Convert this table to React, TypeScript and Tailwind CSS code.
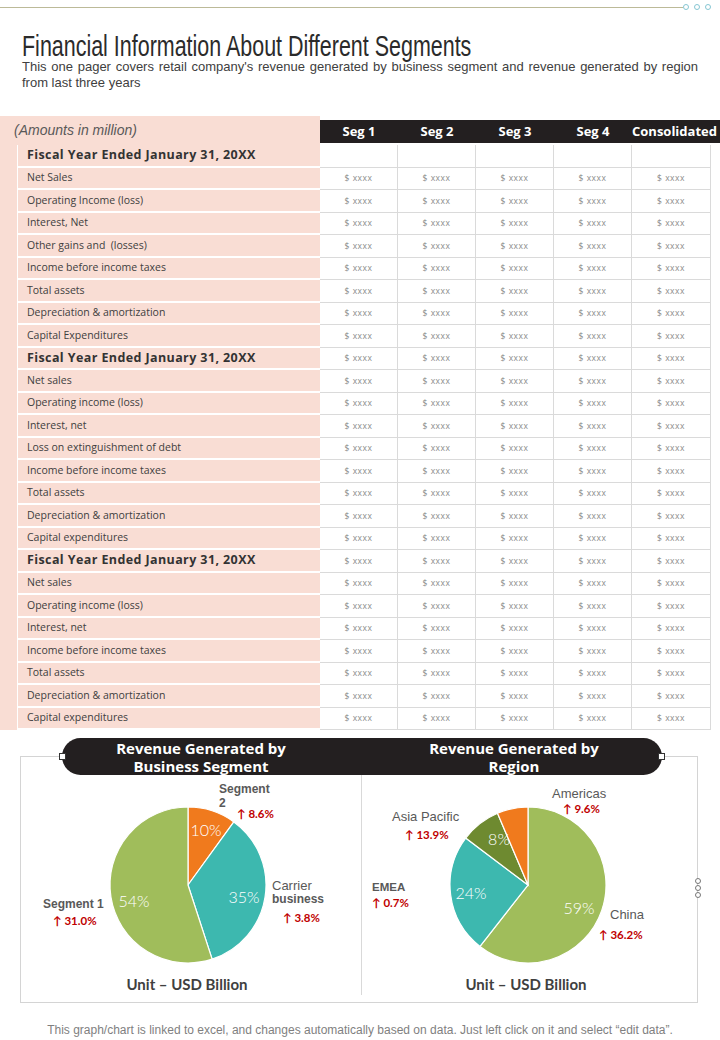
import React from "react";

const open = "[font-family:'Open_Sans','Noto_Sans',sans-serif]";

type Row = { label: string; head?: boolean; blank?: boolean };

const fy = "Fiscal Year Ended January 31, 20XX";

const rows: Row[] = [
  { label: fy, head: true, blank: true },
  { label: "Net Sales" },
  { label: "Operating Income (loss)" },
  { label: "Interest, Net" },
  { label: "Other gains and\u00a0 (losses)" },
  { label: "Income before income taxes" },
  { label: "Total assets" },
  { label: "Depreciation & amortization" },
  { label: "Capital Expenditures" },
  { label: fy, head: true },
  { label: "Net sales" },
  { label: "Operating income (loss)" },
  { label: "Interest, net" },
  { label: "Loss on extinguishment of debt" },
  { label: "Income before income taxes" },
  { label: "Total assets" },
  { label: "Depreciation & amortization" },
  { label: "Capital expenditures" },
  { label: fy, head: true },
  { label: "Net sales" },
  { label: "Operating income (loss)" },
  { label: "Interest, net" },
  { label: "Income before income taxes" },
  { label: "Total assets" },
  { label: "Depreciation & amortization" },
  { label: "Capital expenditures" },
];

const cols = ["Seg 1", "Seg 2", "Seg 3", "Seg 4", "Consolidated"];
const colW = ["w-[78px]", "w-[78px]", "w-[78px]", "w-[78px]", "w-[79px]"];

function arc(cx: number, cy: number, r: number, a0: number, a1: number) {
  const p = (a: number) => {
    const t = (a * Math.PI) / 180;
    return [cx + r * Math.sin(t), cy - r * Math.cos(t)];
  };
  const [x0, y0] = p(a0);
  const [x1, y1] = p(a1);
  const large = a1 - a0 > 180 ? 1 : 0;
  return `M${cx} ${cy} L${x0.toFixed(2)} ${y0.toFixed(2)} A${r} ${r} 0 ${large} 1 ${x1.toFixed(2)} ${y1.toFixed(2)} Z`;
}

type Slice = { a0: number; a1: number; color: string };

function Pie({ cx, cy, slices }: { cx: number; cy: number; slices: Slice[] }) {
  return (
    <g>
      {slices.map((s, i) => (
        <path key={i} d={arc(cx, cy, 78, s.a0, s.a1)} fill={s.color} stroke="#ffffff" strokeWidth={1.2} />
      ))}
    </g>
  );
}

// label styles for the chart canvas
const gray = "fill-[#595959] [font-family:'Liberation_Sans',Arial,sans-serif]";
const red = "fill-[#c00000] text-[11.5px] font-bold [font-family:'Lato','Liberation_Sans',sans-serif]";
const pct = "fill-white text-[16px] font-light [font-family:'Lato',sans-serif]";
const unit = "fill-[#404040] text-[15px] font-bold [font-family:'Lato',sans-serif]";

function SegmentChart() {
  return (
    <svg width={340} height={227} className="block">
      <Pie
        cx={167}
        cy={110}
        slices={[
          { a0: 0, a1: 36, color: "#f07a1d" },
          { a0: 36, a1: 162, color: "#3db8af" },
          { a0: 162, a1: 360, color: "#a0bd5b" },
        ]}
      />
      <text x={185} y={61} textAnchor="middle" className={pct}>10%</text>
      <text x={223} y={128} textAnchor="middle" className={pct}>35%</text>
      <text x={113} y={132} textAnchor="middle" className={pct}>54%</text>

      <text x={198} y={18} className={`${gray} text-[12px] font-bold`}>Segment</text>
      <text x={198} y={32} className={`${gray} text-[12px] font-bold`}>2</text>
      <text x={216} y={43} className={red}>↑ 8.6%</text>

      <text x={251} y={115} className={`${gray} text-[13px]`}>Carrier</text>
      <text x={251} y={128} className={`${gray} text-[12px] font-bold`}>business</text>
      <text x={262} y={147} className={red}>↑ 3.8%</text>

      <text x={22} y={133} className={`${gray} text-[12px] font-bold`}>Segment 1</text>
      <text x={32} y={150} className={red}>↑ 31.0%</text>

      <text x={166} y={215} textAnchor="middle" className={unit}>Unit – USD Billion</text>
    </svg>
  );
}

function RegionChart() {
  return (
    <svg width={334} height={227} className="block">
      <Pie
        cx={166}
        cy={110}
        slices={[
          { a0: 0, a1: 218, color: "#a0bd5b" },
          { a0: 218, a1: 307, color: "#3db8af" },
          { a0: 307, a1: 337, color: "#6e8a30" },
          { a0: 337, a1: 360, color: "#f07a1d" },
        ]}
      />
      <text x={137} y={70} textAnchor="middle" className={pct}>8%</text>
      <text x={109} y={124} textAnchor="middle" className={pct}>24%</text>
      <text x={217} y={139} textAnchor="middle" className={pct}>59%</text>

      <text x={190} y={23} className={`${gray} text-[13px]`}>Americas</text>
      <text x={201} y={38} className={red}>↑ 9.6%</text>

      <text x={30} y={46} className={`${gray} text-[13px]`}>Asia Pacific</text>
      <text x={43} y={64} className={red}>↑ 13.9%</text>

      <text x={10} y={116} className={`${gray} text-[11.5px] font-bold`}>EMEA</text>
      <text x={10} y={132} className={red}>↑ 0.7%</text>

      <text x={248} y={144} className={`${gray} text-[13px]`}>China</text>
      <text x={237} y={164} className={red}>↑ 36.2%</text>

      <text x={164} y={215} textAnchor="middle" className={unit}>Unit – USD Billion</text>
    </svg>
  );
}

export default function App() {
  return (
    <div className="relative h-[1040px] w-[720px] overflow-hidden bg-white [font-family:'Liberation_Sans',Arial,sans-serif]">
      {/* top rule with three rings */}
      <div className="flex h-[14px] items-center pr-[9px]">
        <div className="h-px flex-1 bg-[#bcba98]" />
        <div className="flex gap-[5px]">
          <span className="h-[6px] w-[6px] rounded-full border border-[#86c6d3]" />
          <span className="h-[6px] w-[6px] rounded-full border border-[#86c6d3]" />
          <span className="h-[6px] w-[6px] rounded-full border border-[#86c6d3]" />
        </div>
      </div>

      {/* no narrow face is installed, so the title is squeezed horizontally */}
      <h1 className="mt-[20px] h-[24px] px-[22px] text-[29px] font-normal leading-[24px] text-[#2b2b2b]">
        <span className="inline-block origin-left scale-x-[0.74] whitespace-nowrap">
          Financial Information About Different Segments
        </span>
      </h1>
      <div className="mt-px px-[22px] text-[13px] leading-[16px] text-[#404040]">
        <p className="text-justify [text-align-last:justify]">
          This one pager covers retail company's revenue generated by business segment and revenue generated by region
        </p>
        <p>from last three years</p>
      </div>

      {/* table */}
      <div className="mt-[25px]">
        <div className="flex h-[29px]">
          <div className="flex w-[320px] items-center bg-[#f9ddd4] pl-[14px] text-[14px] italic text-[#595959]">
            (Amounts in million)
          </div>
          <div className="pt-[4px]">
            <div className={`flex h-[23px] w-[400px] items-center bg-[#231f20] text-[13px] font-bold text-white ${open}`}>
              {cols.map((c, i) => (
                <div key={c} className={`${colW[i]} whitespace-nowrap text-center`}>
                  {c}
                </div>
              ))}
            </div>
          </div>
        </div>

        {rows.map((r, i) => (
          <div key={i} className="flex h-[22.5px]">
            <div className="w-[17px] bg-[#f9ddd4]" />
            <div
              className={`flex w-[303px] items-center border-b-2 border-l border-white bg-[#f9ddd4] pl-[9px] pt-px ${open} ${
                r.head
                  ? "text-[12.5px] font-bold tracking-[0.4px] text-[#333333]"
                  : "text-[10.5px] text-[#404040]"
              }`}
            >
              {r.label}
            </div>
            {colW.map((w, j) => (
              <div
                key={j}
                className={`${w} flex items-center justify-center border-b border-r border-[#dadada] pt-px text-[8.5px] tracking-[0.5px] text-[#8a8a8a] ${open}`}
              >
                {r.blank ? "" : "$ xxxx"}
              </div>
            ))}
          </div>
        ))}
      </div>

      {/* charts */}
      <div className="relative ml-[20px] mt-[26px] h-[247px] w-[678px] border border-[#d4d4d4]">
        <div className={`relative -mt-[19px] ml-[41px] flex h-[37px] w-[600px] items-center rounded-full bg-[#231f20] text-[15px] font-bold leading-[18px] text-white ${open}`}>
          <span className="absolute -left-[3px] top-[15px] h-[7px] w-[7px] border border-[#333] bg-white" />
          <span className="absolute -right-[3px] top-[15px] h-[7px] w-[7px] border border-[#333] bg-white" />
          <div className="w-[278px] text-center">
            Revenue Generated by
            <br />
            Business Segment
          </div>
          <div className="ml-[35px] w-[278px] text-center">
            Revenue Generated by
            <br />
            Region
          </div>
        </div>
        <div className="flex">
          <SegmentChart />
          <div className="h-[220px] w-px bg-[#d9d9d9]" />
          <RegionChart />
        </div>
        <div className="absolute -right-[4px] top-[121px] flex flex-col gap-px">
          <span className="h-[6px] w-[6px] rounded-full border border-[#777] bg-white" />
          <span className="h-[6px] w-[6px] rounded-full border border-[#777] bg-white" />
          <span className="h-[6px] w-[6px] rounded-full border border-[#777] bg-white" />
        </div>
      </div>

      <p className="mt-[19px] text-center text-[12px] leading-[16px] text-[#7f7f7f]">
        This graph/chart is linked to excel, and changes automatically based on data. Just left click on it and select “edit data”.
      </p>
    </div>
  );
}
